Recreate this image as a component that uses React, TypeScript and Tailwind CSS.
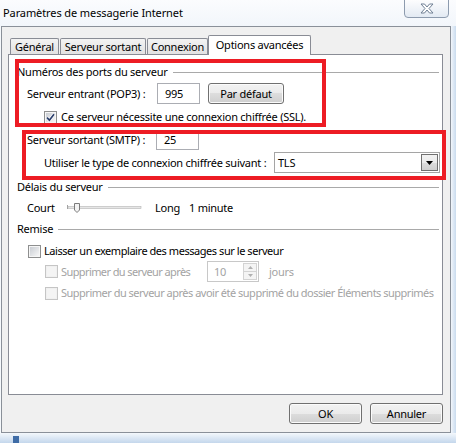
import React from "react";

const Checkbox = ({ checked = false, disabled = false }: { checked?: boolean; disabled?: boolean }) => (
  <span
    className={`flex h-[13px] w-[13px] shrink-0 items-center justify-center border ${
      disabled ? "border-[#c5c5c5]" : "border-[#8e8f8f]"
    }`}
  >
    <span
      className={`flex h-[11px] w-[11px] items-center justify-center border ${
        disabled
          ? "border-[#f0f0f0] bg-[#f4f4f4]"
          : "border-[#f6f6f6] bg-gradient-to-br from-[#c9cdd3] to-[#f7f7f7]"
      }`}
    >
      {checked && (
        <svg width="9" height="9" viewBox="0 0 9 9">
          <path d="M1 4.6 L3.4 7.2 L8 1.2" fill="none" stroke="#fff" strokeWidth="3" />
          <path d="M1 4.6 L3.4 7.2 L8 1.2" fill="none" stroke="#2b3f6c" strokeWidth="1.7" />
        </svg>
      )}
    </span>
  </span>
);

const WinButton = ({ children, className = "" }: { children: React.ReactNode; className?: string }) => (
  <div
    className={`flex h-[21px] shrink-0 items-center justify-center rounded-[3px] border border-[#707070] bg-[linear-gradient(#f2f2f2_0%,#ebebeb_50%,#dddddd_50%,#cfcfcf_100%)] shadow-[inset_0_0_0_1px_#fbfbfb] ${className}`}
  >
    {children}
  </div>
);

const GroupHeader = ({ label }: { label: string }) => (
  <div className="flex h-[16px] items-center pl-[8px] pr-[3px]">
    <span>{label}</span>
    <span className="ml-[5px] h-px flex-1 bg-[#a9a9a9]" />
  </div>
);

const Tab = ({ label, width, selected = false }: { label: string; width: string; selected?: boolean }) =>
  selected ? (
    <div
      className={`relative z-10 -mb-px flex h-[20px] ${width} items-start justify-center rounded-t-[2px] border border-b-0 border-[#898c95] bg-white pt-[1px]`}
    >
      {label}
    </div>
  ) : (
    <div
      className={`flex h-[16px] ${width} items-center justify-center rounded-t-[2px] border border-b-0 border-[#898c95] bg-gradient-to-b from-[#f3f3f3] to-[#e2e2e2]`}
    >
      {label}
    </div>
  );

export default function App() {
  return (
    <div className="relative h-[443px] w-[456px] overflow-hidden whitespace-nowrap bg-[#f6f9fc] font-['Noto_Sans',sans-serif] text-[11px] leading-[16px] tracking-[-0.25px] text-black">
      {/* Title bar */}
      <div className="flex h-[26px] items-start justify-between bg-gradient-to-b from-[#fbfcfe] to-[#f2f6fb] pl-[3px]">
        <span className="mt-[5px] tracking-[-0.1px]">Paramètres de messagerie Internet</span>
        <div className="mr-[7px] -mt-px flex h-[19px] w-[45px] items-center justify-center rounded-b-[4px] border border-[#8d9bae] bg-gradient-to-b from-[#fdfdfe] to-[#e3eaf3]">
          <svg width="14" height="11" viewBox="0 0 14 11">
            <path
              d="M1 1 H4.5 L7 4 L9.5 1 H13 L9 5.5 L13 10 H9.5 L7 7 L4.5 10 H1 L5 5.5 Z"
              fill="#fff"
              stroke="#6f7f94"
              strokeWidth="1"
              strokeLinejoin="round"
            />
          </svg>
        </div>
      </div>

      <div className="flex">
        {/* Client area */}
        <div className="ml-[1px] flex h-[407px] w-[450px] flex-col border border-[#8a9099] bg-[#f0f0f0]">
          {/* Tabs */}
          <div className="ml-[8px] mt-[8px] flex h-[19px] items-end">
            <Tab label="Général" width="w-[49px]" />
            <div className="ml-[1px]">
              <Tab label="Serveur sortant" width="w-[86px]" />
            </div>
            <div className="ml-[1px]">
              <Tab label="Connexion" width="w-[61px]" />
            </div>
            <Tab label="Options avancées" width="w-[103px]" selected />
          </div>

          {/* Tab page */}
          <div className="ml-[6px] h-[341px] w-[435px] border border-[#898c95] bg-white">
            <div className="mt-[9px]">
              <GroupHeader label="Numéros des ports du serveur" />
            </div>
            <div className="mt-[2px] flex h-[23px] items-center pl-[18px]">
              <span className="w-[130px] shrink-0">Serveur entrant (POP3) :</span>
              <div className="flex h-[21px] w-[43px] items-center border border-[#abadb3] pl-[7px]">995</div>
              <WinButton className="ml-[8px] w-[76px]">Par défaut</WinButton>
            </div>
            <div className="mt-[4px] flex h-[16px] items-center gap-[4px] pl-[35px]">
              <Checkbox checked />
              <span>Ce serveur nécessite une connexion chiffrée (SSL).</span>
            </div>
            <div className="mt-[5px] flex h-[20px] items-center pl-[18px]">
              <span className="w-[129px] shrink-0">Serveur sortant (SMTP) :</span>
              <div className="flex h-[20px] w-[43px] items-center border border-[#abadb3] pl-[7px]">25</div>
            </div>
            <div className="mt-[2px] flex h-[21px] items-center pl-[35px]">
              <span className="w-[230px] shrink-0">Utiliser le type de connexion chiffrée suivant :</span>
              <div className="flex h-[21px] w-[166px] items-center justify-between border border-[#a5a5a5] pl-[3px] pr-[1px]">
                <span>TLS</span>
                <div className="flex h-[17px] w-[17px] items-center justify-center border border-[#707070] bg-[linear-gradient(#f2f2f2_0%,#ebebeb_50%,#dddddd_50%,#cfcfcf_100%)]">
                  <svg width="7" height="4" viewBox="0 0 7 4">
                    <path d="M0 0 H7 L3.5 4 Z" fill="#000" />
                  </svg>
                </div>
              </div>
            </div>

            <div className="mt-[6px]">
              <GroupHeader label="Délais du serveur" />
            </div>
            <div className="mt-[5px] flex h-[16px] items-center pl-[18px]">
              <span className="w-[40px] shrink-0">Court</span>
              <svg width="75" height="12" viewBox="0 0 75 12" className="shrink-0">
                <line x1="0.5" y1="3" x2="0.5" y2="7" stroke="#a0a0a0" />
                <rect x="1" y="4.5" width="73" height="2" fill="#e6e6e6" stroke="#b4b4b4" strokeWidth="0.6" />
                <path d="M7.5 1.5 H12.5 V8 L10 10.5 L7.5 8 Z" fill="#f3f3f3" stroke="#7c7c7c" />
              </svg>
              <span className="ml-[13px] w-[34px] shrink-0">Long</span>
              <span>1 minute</span>
            </div>

            <div className="mt-[5px]">
              <GroupHeader label="Remise" />
            </div>
            <div className="mt-[6px] flex h-[16px] items-center gap-[3px] pl-[19px]">
              <Checkbox />
              <span className="tracking-[-0.45px]">Laisser un exemplaire des messages sur le serveur</span>
            </div>
            <div className="mt-[2px] flex h-[21px] items-center pl-[36px] text-[#a3a3a3]">
              <Checkbox disabled />
              <span className="ml-[3px] w-[146px] shrink-0 tracking-[-0.6px]">Supprimer du serveur après</span>
              <div className="flex h-[21px] w-[52px] items-center justify-between border border-[#c8c8c8] pl-[6px] pr-[1px]">
                <span>10</span>
                <div className="flex h-[17px] w-[14px] flex-col border border-[#d3d3d3]">
                  <div className="flex flex-1 items-center justify-center border-b border-[#d3d3d3] bg-[#f4f4f4]">
                    <svg width="5" height="3" viewBox="0 0 5 3">
                      <path d="M0 3 H5 L2.5 0 Z" fill="#b0b0b0" />
                    </svg>
                  </div>
                  <div className="flex flex-1 items-center justify-center bg-[#f4f4f4]">
                    <svg width="5" height="3" viewBox="0 0 5 3">
                      <path d="M0 0 H5 L2.5 3 Z" fill="#b0b0b0" />
                    </svg>
                  </div>
                </div>
              </div>
              <span className="ml-[10px]">jours</span>
            </div>
            <div className="mt-[3px] flex h-[16px] items-center gap-[3px] pl-[36px] text-[#a3a3a3]">
              <Checkbox disabled />
              <span className="tracking-[-0.5px]">
                Supprimer du serveur après avoir été supprimé du dossier Éléments supprimés
              </span>
            </div>
          </div>

          {/* Dialog buttons */}
          <div className="mt-[8px] flex justify-end gap-[8px] pr-[7px]">
            <WinButton className="w-[73px]">OK</WinButton>
            <WinButton className="w-[73px]">Annuler</WinButton>
          </div>
        </div>
        <div className="h-[407px] flex-1 bg-gradient-to-r from-[#f2f6fb] to-[#c9dbee]" />
      </div>

      {/* Bottom frame */}
      <div className="flex h-[10px] bg-gradient-to-b from-[#f4f8fc] to-[#c4d7ec]">
        <div className="ml-[13px] mt-[3px] h-[7px] w-[6px] bg-[#3f6ca6]" />
      </div>

      {/* Red annotation boxes */}
      <div className="pointer-events-none absolute left-[15px] top-[59px] h-[68px] w-[311px] border-[4px] border-[#ed1c24]" />
      <div className="pointer-events-none absolute left-[22px] top-[130px] h-[50px] w-[424px] border-[4px] border-[#ed1c24]" />
    </div>
  );
}
